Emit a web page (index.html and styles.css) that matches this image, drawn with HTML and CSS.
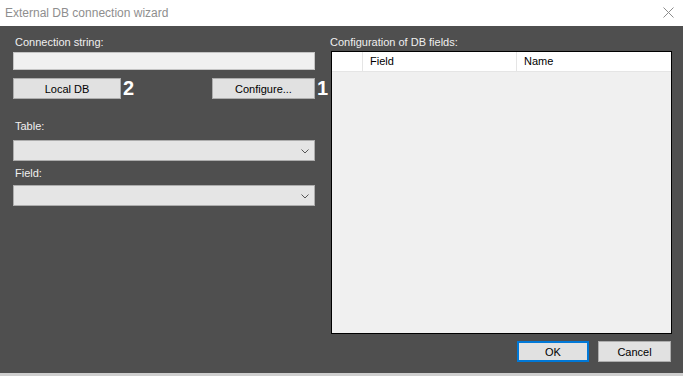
FILE: index.html
```html
<!DOCTYPE html>
<html lang="en">
<head>
    <meta charset="UTF-8">
    <meta name="viewport" content="width=device-width, initial-scale=1.0">
    <title>External DB connection wizard</title>
    <link rel="stylesheet" href="styles.css">
</head>
<body>
    <div class="window">
        <div class="titlebar">
            <span class="title">External DB connection wizard</span>
            <svg class="close" width="11" height="11" viewBox="0 0 11 11">
                <path d="M0.5 0.5 L10.5 10.5 M10.5 0.5 L0.5 10.5" stroke="#8c8c8c" stroke-width="1" fill="none"/>
            </svg>
        </div>
        <div class="main">
            <div class="leftCol">
                <div class="label">Connection string:</div>
                <div class="textBox connInput"></div>
                <div class="buttonRow">
                    <button class="btn localBtn">Local DB<span class="mark">2</span></button>
                    <button class="btn configBtn">Configure...<span class="mark">1</span></button>
                </div>
                <div class="label tableLabel">Table:</div>
                <div class="combo tableCombo">
                    <svg class="chevron" width="8" height="5" viewBox="0 0 8 5"><polyline points="0.5,0.5 4,4 7.5,0.5" stroke="#555" fill="none"/></svg>
                </div>
                <div class="label fieldLabel">Field:</div>
                <div class="combo fieldCombo">
                    <svg class="chevron" width="8" height="5" viewBox="0 0 8 5"><polyline points="0.5,0.5 4,4 7.5,0.5" stroke="#555" fill="none"/></svg>
                </div>
            </div>
            <div class="rightCol">
                <div class="label">Configuration of DB fields:</div>
                <div class="grid">
                    <div class="gridHeader">
                        <div class="hcell selCol"></div>
                        <div class="hcell fieldCol">Field</div>
                        <div class="hcell nameCol">Name</div>
                    </div>
                </div>
                <div class="footer">
                    <button class="btn okBtn">OK</button>
                    <button class="btn cancelBtn">Cancel</button>
                </div>
            </div>
        </div>
    </div>
</body>
</html>
```

FILE: styles.css
```css
body {
    margin: 0;
    font-family: "Liberation Sans", Arial, sans-serif;
    font-size: 11px;
    background-color: #cfcfcf;
}
.window {
    width: 683px;
    height: 373px;
    background: #4f4f4f;
    overflow: hidden;
}
.titlebar {
    height: 26px;
    background: #ffffff;
    display: flex;
    align-items: center;
    justify-content: space-between;
    padding: 0 9px 0 5px;
    box-sizing: border-box;
}
.title {
    font-size: 12px;
    color: #8e8e8e;
}
.close {
    display: block;
    margin-bottom: 1px;
}

.main {
    display: flex;
    padding: 10px 0 0 13px;
    gap: 15px;
}
.label {
    color: #f0f0f0;
    line-height: 13px;
    height: 13px;
}
.leftCol .label { padding-left: 2px; }

.leftCol {
    width: 302px;
    display: flex;
    flex-direction: column;
}
.textBox {
    height: 18px;
    background: #f0f0f0;
    border: 1px solid #c4c4c4;
    box-sizing: border-box;
}
.connInput { margin-top: 3px; }
.buttonRow {
    display: flex;
    justify-content: space-between;
    margin-top: 8px;
}
.btn {
    font-family: "Liberation Sans", Arial, sans-serif;
    font-size: 11px;
    color: #000;
    height: 21px;
    background: #e1e1e1;
    border: 1px solid #adadad;
    padding: 0;
    position: relative;
}
.localBtn { width: 108px; }
.configBtn { width: 103px; }
.mark {
    position: absolute;
    left: 100%;
    top: -2px;
    margin-left: 3px;
    font-size: 20px;
    font-weight: bold;
    color: #ffffff;
    line-height: 22px;
}
.tableLabel { margin-top: 21px; }
.fieldLabel { margin-top: 6px; }
.combo {
    height: 21px;
    background: #e5e5e5;
    border: 1px solid #adadad;
    box-sizing: border-box;
    display: flex;
    align-items: center;
    justify-content: flex-end;
    padding-right: 5px;
}
.tableCombo { margin-top: 7px; }
.fieldCombo { margin-top: 5px; }
.chevron { display: block; margin-top: 1px; }

.rightCol {
    width: 342px;
    display: flex;
    flex-direction: column;
}
.grid {
    margin: 2px 0 0 1px;
    height: 283px;
    background: #f0f0f0;
    border: 1px solid #000;
    box-sizing: border-box;
}
.gridHeader {
    display: flex;
    height: 20px;
    background: #ffffff;
    border-bottom: 1px solid #e5e5e5;
    box-sizing: border-box;
}
.hcell {
    border-right: 1px solid #e5e5e5;
    color: #000;
    line-height: 19px;
    padding-left: 7px;
    box-sizing: border-box;
}
.selCol { width: 31px; }
.fieldCol { width: 154px; }
.nameCol { flex: 1; border-right: none; }

.footer {
    display: flex;
    justify-content: flex-end;
    gap: 9px;
    margin-top: 7px;
    padding-right: 1px;
}
.okBtn {
    width: 72px;
    border-color: #0078d7;
    box-shadow: inset 0 0 0 1px #0078d7;
}
.cancelBtn { width: 73px; }
```
